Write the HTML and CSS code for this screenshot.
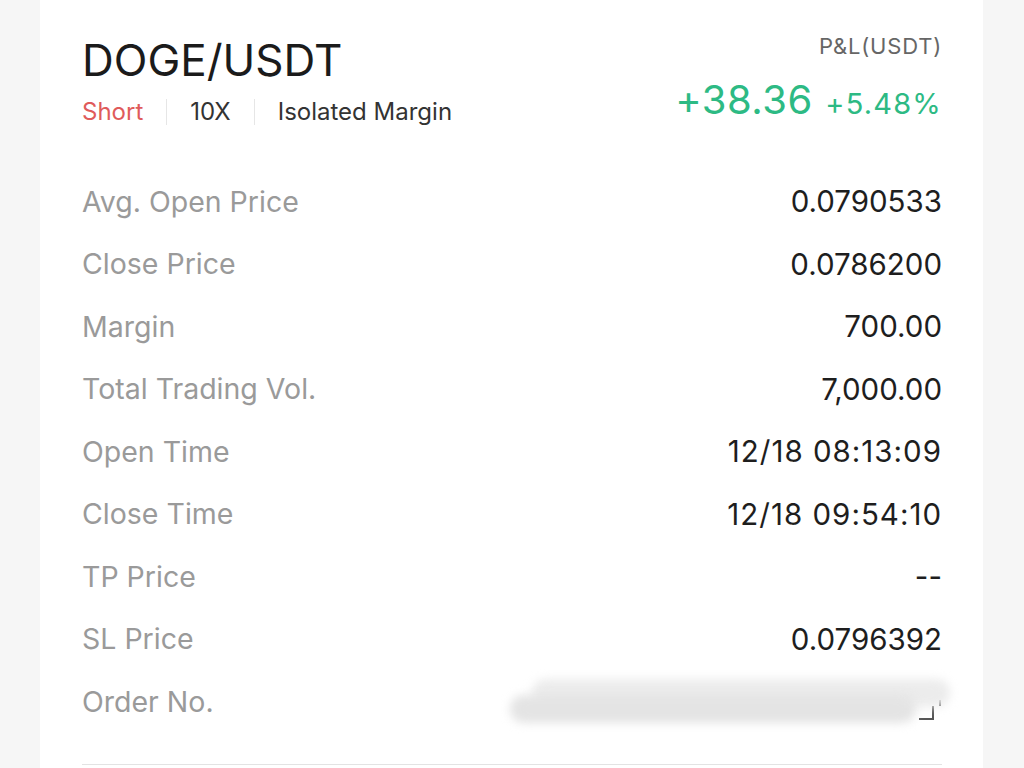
FILE: index.html
```html
<!DOCTYPE html>
<html lang="en">
  <head>
    <meta charset="UTF-8" />
    <meta name="viewport" content="width=device-width, initial-scale=1.0" />
    <title>Order Details</title>
    <link rel="stylesheet" href="styles.css">
  </head>
  <body>
    <div class="card">
      <div class="header">
        <div class="pair">
          <h1>DOGE/USDT</h1>
          <div class="tags">
            <span class="side">Short</span>
            <span class="sep"></span>
            <span>10X</span>
            <span class="sep"></span>
            <span>Isolated Margin</span>
          </div>
        </div>
        <div class="pnl">
          <div class="pnl-label">P&amp;L(USDT)</div>
          <div class="pnl-value">
            <span class="pnl-amount">+38.36</span>
            <span class="pnl-rate">+5.48%</span>
          </div>
        </div>
      </div>

      <div class="detail-list">
        <div class="detail-row">
          <span class="label">Avg. Open Price</span>
          <span class="value">0.0790533</span>
        </div>
        <div class="detail-row">
          <span class="label">Close Price</span>
          <span class="value">0.0786200</span>
        </div>
        <div class="detail-row">
          <span class="label">Margin</span>
          <span class="value">700.00</span>
        </div>
        <div class="detail-row">
          <span class="label">Total Trading Vol.</span>
          <span class="value">7,000.00</span>
        </div>
        <div class="detail-row">
          <span class="label">Open Time</span>
          <span class="value time">12/18 08:13:09</span>
        </div>
        <div class="detail-row">
          <span class="label">Close Time</span>
          <span class="value time">12/18 09:54:10</span>
        </div>
        <div class="detail-row">
          <span class="label">TP Price</span>
          <span class="value">--</span>
        </div>
        <div class="detail-row">
          <span class="label">SL Price</span>
          <span class="value">0.0796392</span>
        </div>
        <div class="detail-row">
          <span class="label">Order No.</span>
          <span class="value order-no">
            <!-- copy icon, mostly covered by the masked number -->
            <svg class="copy-icon" width="26" height="24" viewBox="0 0 26 24">
              <path d="M24 2v6" fill="none" stroke="#555" stroke-width="2" />
              <path d="M3 21h14V8" fill="none" stroke="#555" stroke-width="2" />
            </svg>
            <span class="masked masked-top"></span>
            <span class="masked masked-bottom"></span>
          </span>
        </div>
      </div>

      <div class="divider"></div>
    </div>
  </body>
</html>
```

FILE: styles.css
```css
body {
  margin: 0;
  background-color: #f6f6f6;
  font-family: Inter, Roboto, "Noto Sans", Arial, sans-serif;
  color: #1e1e1e;
}

.card {
  margin-left: 40px;
  width: 943px;
  height: 768px;
  box-sizing: border-box;
  padding: 30px 41px 0 42px;
  background-color: #fff;
  overflow: hidden;
}

.header {
  display: flex;
  justify-content: space-between;
  align-items: flex-start;
}

h1 {
  margin: 0;
  font-size: 44px;
  font-weight: 400;
  line-height: 60px;
  color: #1b1b1b;
}

.tags {
  display: flex;
  align-items: center;
  margin-top: 2px;
  font-size: 24px;
  line-height: 40px;
  color: #333;
}

.tags .side {
  color: #df5b5b;
}

.sep {
  width: 1px;
  height: 26px;
  margin: 0 23px;
  background-color: #e6e6e6;
}

.pnl {
  text-align: right;
}

.pnl-label {
  font-size: 22px;
  line-height: 32px;
  letter-spacing: 0.8px;
  color: #666;
}

.pnl-value {
  margin-top: 14px;
  color: #2dba84;
}

.pnl-amount {
  font-size: 40px;
  line-height: 48px;
  letter-spacing: 0.5px;
}

.pnl-rate {
  margin-left: 8px;
  font-size: 29px;
  letter-spacing: 1.2px;
}

.detail-list {
  margin-top: 38px;
}

.detail-row {
  display: flex;
  justify-content: space-between;
  align-items: center;
  height: 62.5px;
  font-size: 28.5px;
}

.label {
  color: #9a9a9a;
}

.value {
  font-size: 29.5px;
  color: #1e1e1e;
}

.value.time {
  letter-spacing: 1px;
}

.order-no {
  position: relative;
  width: 440px;
  height: 48px;
}

.masked {
  position: absolute;
  background-color: #e4e4e4;
  filter: blur(5px);
}

.masked-top {
  left: 30px;
  right: -8px;
  top: 2px;
  height: 28px;
  border-radius: 14px;
  background-color: #ececec;
}

.masked-bottom {
  left: 8px;
  right: 26px;
  top: 18px;
  height: 28px;
  border-radius: 14px;
}

.copy-icon {
  position: absolute;
  right: 0;
  top: 21px;
}

.divider {
  margin-top: 31px;
  height: 1px;
  background-color: #e3e3e3;
}
```
